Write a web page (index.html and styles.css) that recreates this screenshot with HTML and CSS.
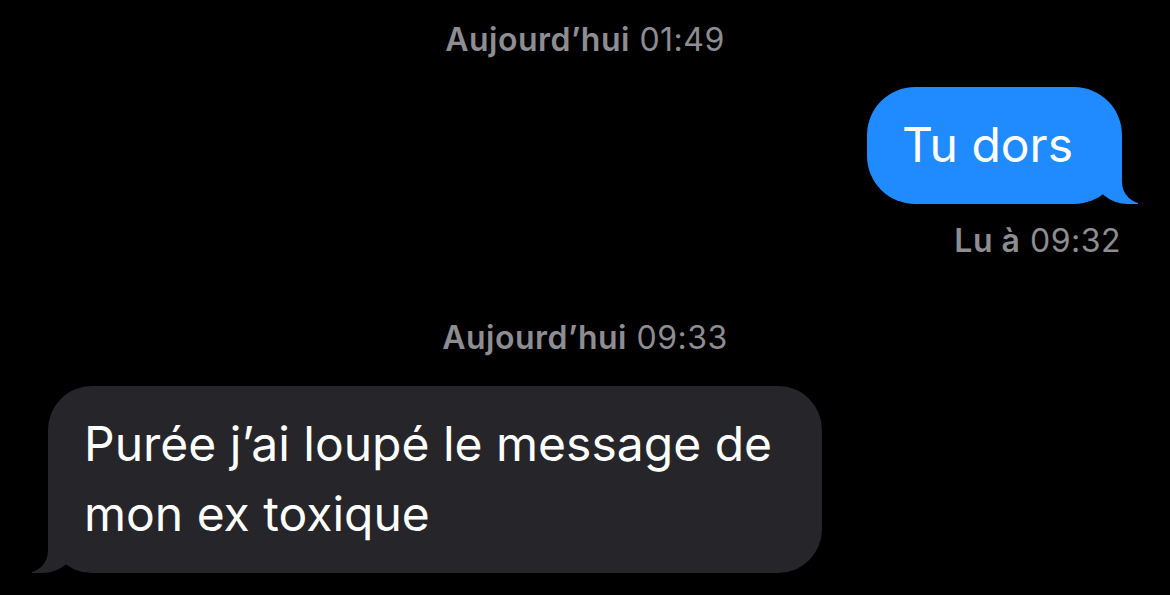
FILE: index.html
```html
<!DOCTYPE html>
<html lang="fr">

<head>
    <meta charset="UTF-8">
    <meta name="viewport" content="width=device-width, initial-scale=1.0">
    <title>Messages</title>
    <link rel="stylesheet" href="styles.css">
</head>

<body>
    <div class="chat">
        <div class="stamp"><b>Aujourd’hui</b> 01:49</div>

        <div class="row row-me">
            <div class="bubble bubble-me">Tu dors</div>
        </div>
        <div class="receipt"><b>Lu à</b> 09:32</div>

        <div class="stamp stamp-second"><b>Aujourd’hui</b> 09:33</div>

        <div class="row row-them">
            <div class="bubble bubble-them">Purée j’ai loupé le message de<br>mon ex toxique</div>
        </div>
    </div>
</body>

</html>
```

FILE: styles.css
```css
* {
    margin: 0;
    padding: 0;
    box-sizing: border-box;
}

body {
    background-color: black;
    font-family: Inter, "Noto Sans", sans-serif;
}

.chat {
    display: flex;
    flex-direction: column;
    padding: 22px 48px 0;
}

.stamp {
    text-align: center;
    color: #8d8d92;
    font-size: 32px;
    line-height: 36px;
    letter-spacing: 0.5px;
}

.stamp b {
    font-weight: 600;
}

.stamp-second {
    margin-top: 61px;
}

.row {
    display: flex;
    margin-top: 29px;
}

.row-me {
    justify-content: flex-end;
}

.row-them {
    justify-content: flex-start;
    margin-top: 30px;
}

.bubble {
    position: relative;
    font-size: 48px;
    line-height: 70px;
    color: white;
    padding: 23px 49px 24px 35px;
    border-radius: 48px;
}

.bubble-me {
    background-color: #1f8bfe;
}

.bubble-them {
    background-color: #262529;
    padding-left: 36px;
    padding-right: 50px;
    border-radius: 44px;
}

/* tails */
.bubble::before,
.bubble::after {
    content: "";
    position: absolute;
    bottom: 0;
}

.bubble-me::before {
    right: -16px;
    width: 44px;
    height: 56px;
    background-color: #1f8bfe;
    border-bottom-left-radius: 34px 30px;
}

.bubble-me::after {
    right: -56px;
    width: 56px;
    height: 60px;
    background-color: black;
    border-bottom-left-radius: 22px;
}

.bubble-them::before {
    left: -16px;
    width: 44px;
    height: 56px;
    background-color: #262529;
    border-bottom-right-radius: 34px 30px;
}

.bubble-them::after {
    left: -56px;
    width: 56px;
    height: 60px;
    background-color: black;
    border-bottom-right-radius: 22px;
}

.receipt {
    text-align: right;
    margin-top: 19px;
    margin-right: 1px;
    color: #8d8d92;
    font-size: 32px;
    line-height: 36px;
    letter-spacing: 0.5px;
}

.receipt b {
    font-weight: 600;
}
```
